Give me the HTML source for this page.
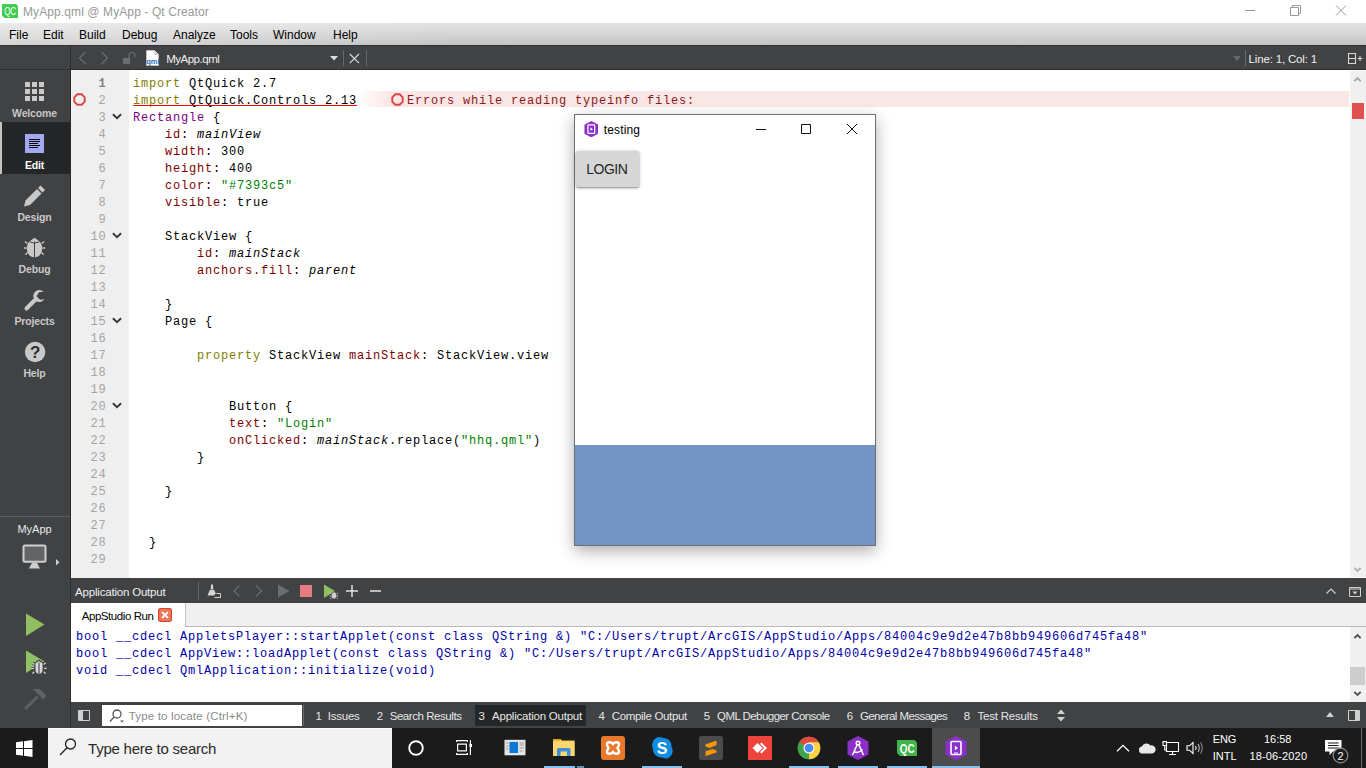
<!DOCTYPE html>
<html lang="en">
<head>
<meta charset="utf-8">
<title>MyApp.qml @ MyApp - Qt Creator</title>
<style>
*{box-sizing:border-box;margin:0;padding:0}
html,body{width:1366px;height:768px;overflow:hidden;background:#fff}
body{position:relative;font-family:"Liberation Sans",sans-serif;font-size:12px;color:#000}
.abs{position:absolute}
#titlebar{left:0;top:0;width:1366px;height:23px;background:#fff}
#titlebar .t{left:23px;top:5px;font-size:12px;color:#999;white-space:nowrap;letter-spacing:.1px}
#menubar{left:0;top:23px;width:1366px;height:22px;background:linear-gradient(#e3e3e3 0%,#d5d5d5 50%,#c4c4c4 100%)}
#menubar span{position:absolute;top:5px;font-size:12px;color:#000;white-space:nowrap}
#side{left:0;top:45px;width:71px;height:683px;background:#404244}
#toolbar{left:71px;top:45px;width:1295px;height:25px;background:#404244}
.mode{position:absolute;left:0;width:71px;height:52px}
.mode .lbl{position:absolute;left:0;width:69px;top:37px;text-align:center;font-size:10.5px;font-weight:bold;color:#c8c8c8;letter-spacing:-.15px}
#editor{left:71px;top:70px;width:1278px;height:508px;background:#fff}
#gutter{left:71px;top:70px;width:58px;height:508px;background:#efefef}
.ln{position:absolute;left:71px;width:35.4px;height:17px;line-height:17px;text-align:right;font-family:"Liberation Mono",monospace;font-size:12px;letter-spacing:.799px;color:#a4a4a4;white-space:pre}
.cl{position:absolute;left:133px;height:17px;line-height:17px;font-family:"Liberation Mono",monospace;font-size:12px;letter-spacing:.799px;color:#000;white-space:pre}
.k{color:#808000}.ty{color:#800080}.p{color:#800000}.s{color:#008000}.i{font-style:italic}
.fold{position:absolute;left:112px;width:10px;height:7px}
#vscroll{left:1349px;top:70px;width:17px;height:508px;background:#fff}
#outhead{left:71px;top:578px;width:1295px;height:25px;background:#404244}
#outtabs{left:71px;top:603px;width:1295px;height:24px;background:#f0f0f0;border-bottom:1px solid #b9b9b9}
#outpane{left:71px;top:627px;width:1278px;height:75px;background:#fff}
.ol{position:absolute;left:76px;height:17px;line-height:17px;font-family:"Liberation Mono",monospace;font-size:12px;letter-spacing:.799px;color:#0000aa;white-space:pre}
#statusbar{left:71px;top:702px;width:1295px;height:26px;background:#404244}
#statusbar .it{position:absolute;top:1px;height:26px;line-height:27px;color:#e6e6e6;font-size:11.5px;white-space:nowrap}
#taskbar{left:0;top:728px;width:1366px;height:40px;background:#1b1b1b}
</style>
</head>
<body>
<!--TITLEBAR-->
<div id="titlebar" class="abs">
  <svg class="abs" style="left:2px;top:4px" width="16" height="14" viewBox="0 0 16 14"><path d="M0 0H14L16 2V14H2.500L0 11.500Z" fill="#41cd52"/><text x="2.200" y="11.300" font-family="Liberation Sans, sans-serif" font-size="10.500" fill="#fff" textLength="11.800" lengthAdjust="spacingAndGlyphs">QC</text></svg>
  <div class="abs t" id="f_title" style="letter-spacing:0.1px">MyApp.qml @ MyApp - Qt Creator</div>
  <svg class="abs" style="left:1240px;top:0" width="126" height="23" viewBox="0 0 126 23" fill="none" stroke="#999" stroke-width="1">
    <path d="M5 10.5H15"/>
    <path d="M50.5 7.5H58.5V15.500H50.5Z M52.5 7.5V5.5H60.5V13.5H58.5"/>
    <path d="M96 5.5L106 15.500M106 5.5L96 15.500"/>
  </svg>
</div>

<!--/TITLEBAR-->
<!--MENUBAR-->
<div id="menubar" class="abs">
  <div class="abs" style="left:0;top:0;width:460px;height:22px;background:linear-gradient(90deg,rgba(255,255,255,.28),rgba(255,255,255,.2) 40%,rgba(255,255,255,0))"></div>
  <span style="left:9px">File</span><span style="left:43px">Edit</span><span style="left:79px">Build</span><span style="left:122px">Debug</span><span style="left:173px">Analyze</span><span style="left:230px">Tools</span><span style="left:273px">Window</span><span style="left:333px">Help</span>
</div>

<!--/MENUBAR-->
<!--SIDE-->
<div id="side" class="abs">
  <div class="abs" style="left:70px;top:0;width:1px;height:683px;background:#2d2e30"></div>
  <div class="abs" style="left:0;top:24px;width:70px;height:1px;background:#2d2e30"></div>
  <div class="abs" style="left:0;top:0;width:1366px;height:1px;background:#303133"></div>
  <!-- Welcome : page y 70-122 => local 25-77 -->
  <div class="mode" style="top:25px">
    <svg class="abs" style="left:25px;top:12px" width="19" height="19" viewBox="0 0 19 19" fill="#c9c9c9"><rect x="0" y="0" width="5" height="5"/><rect x="7" y="0" width="5" height="5"/><rect x="14" y="0" width="5" height="5"/><rect x="0" y="7" width="5" height="5"/><rect x="7" y="7" width="5" height="5"/><rect x="14" y="7" width="5" height="5"/><rect x="0" y="14" width="5" height="5"/><rect x="7" y="14" width="5" height="5"/><rect x="14" y="14" width="5" height="5"/></svg>
    <div class="lbl">Welcome</div>
  </div>
  <!-- Edit selected: page y 122-174 => local 77-129 -->
  <div class="mode" style="top:77px;width:70px;background:#242627">
    <div class="abs" style="left:0;top:0;width:2px;height:52px;background:#c4c4c4"></div>
    <svg class="abs" style="left:25px;top:12px" width="19" height="19" viewBox="0 0 19 19"><rect width="19" height="19" fill="#a2a9f0"/><path d="M4 5.500H15M4 7.500H15M4 9.500H13M4 11.500H15M4 13.500H13" stroke="#05050a" stroke-width="1"/></svg>
    <div class="lbl" style="color:#fff">Edit</div>
  </div>
  <!-- Design: 174-226 => local 129 -->
  <div class="mode" style="top:129px">
    <svg class="abs" style="left:23px;top:11px" width="23" height="23" viewBox="0 0 23 23" fill="#c9c9c9"><path d="M1 21.500L2.500 15.500L14 4L18.500 8.500L7 20Z"/><path d="M15 3L17.500 0.500L22 5L19.500 7.500Z"/></svg>
    <div class="lbl">Design</div>
  </div>
  <!-- Debug: 226-278 => local 181 -->
  <div class="mode" style="top:181px">
    <svg class="abs" style="left:23px;top:10px" width="23" height="23" viewBox="0 0 23 23"><path d="M4.300 7.500L1.800 5.500M3.600 12H0.800M4.500 16.500L2.300 18.800M18.700 7.500L21.200 5.500M19.400 12H22.200M18.500 16.500L20.700 18.800" stroke="#c9c9c9" stroke-width="1.300" fill="none"/><path d="M11.500 1.800L15 4.200C18 6 19.200 9 19.200 12.300C19.200 17.500 16 21.300 11.500 21.300C7 21.300 3.800 17.500 3.800 12.300C3.800 9 5 6 8 4.200Z" fill="#c9c9c9"/><path d="M11.500 5.500V21.300M6.500 5.800L11.500 7.200L16.500 5.800" stroke="#404244" stroke-width="1" fill="none"/></svg>
    <div class="lbl">Debug</div>
  </div>
  <!-- Projects: 278-330 => local 233 -->
  <div class="mode" style="top:233px">
    <svg class="abs" style="left:23px;top:11px" width="23" height="23" viewBox="0 0 23 23"><path d="M3.500 19.500L13 10" stroke="#c9c9c9" stroke-width="4" stroke-linecap="round" fill="none"/><path d="M20 2.200A6 6 0 1 0 21.800 9.500L17.500 10.500L13.500 7.500L15.500 3.200Z" fill="#c9c9c9" transform="rotate(8 16 7)"/></svg>
    <div class="lbl">Projects</div>
  </div>
  <!-- Help: 330-382 => local 285 -->
  <div class="mode" style="top:285px">
    <svg class="abs" style="left:24px;top:11px" width="22" height="22" viewBox="0 0 22 22"><circle cx="11.100" cy="11" r="10.200" fill="#c9c9c9"/><text x="11.100" y="17" text-anchor="middle" font-family="Liberation Sans, sans-serif" font-weight="bold" font-size="17" fill="#2c2d2f">?</text></svg>
    <div class="lbl">Help</div>
  </div>
  <!-- separator at page y 516 => local 471 -->
  <div class="abs" style="left:0;top:471px;width:70px;height:1px;background:#5c5e60"></div>
  <div class="abs" style="left:0;top:478px;width:69px;text-align:center;font-size:11px;color:#e8e8e8">MyApp</div>
  <svg class="abs" style="left:22.400px;top:498.500px" width="40" height="27" viewBox="0 0 40 27"><rect x="1.500" y="1.500" width="22" height="16.300" rx="1.500" fill="#626466" stroke="#cfcfcf" stroke-width="2"/><path d="M10 18.800H15L18 24.500H7Z" fill="#cfcfcf"/><path d="M34 15L37.500 18.300L34 21.600Z" fill="#cfcfcf"/></svg>
  <!-- run: page 613-636 => local 568 -->
  <svg class="abs" style="left:25px;top:568px" width="20" height="24" viewBox="0 0 20 24"><path d="M1 0.500L19.500 11.500L1 23Z" fill="#8fbf60"/></svg>
  <svg class="abs" style="left:25px;top:605px" width="24" height="26" viewBox="0 0 24 26"><path d="M1 0.500L19.500 11.500L1 23Z" fill="#8fc063"/><path d="M9.300 14.500L7.300 12.800M8.800 18.300H6.300M9.300 21.800L7.300 23.600M18.700 14.500L20.700 12.800M19.200 18.300H21.700M18.700 21.800L20.700 23.600" stroke="#404244" stroke-width="2.600" fill="none"/><path d="M14 10.300L18.200 13V19.500Q18.200 24.300 14 24.300Q9.800 24.300 9.800 19.500V13Z" fill="#d8d8d8" stroke="#404244" stroke-width="1.300"/><path d="M9.300 14.500L7.300 12.800M8.800 18.300H6.300M9.300 21.800L7.300 23.600M18.700 14.500L20.700 12.800M19.200 18.300H21.700M18.700 21.800L20.700 23.600" stroke="#d8d8d8" stroke-width="1.200" fill="none"/><path d="M14 12.500V24" stroke="#404244" stroke-width="1.100"/></svg>
  <svg class="abs" style="left:22px;top:642px" width="26" height="26" viewBox="0 0 26 26"><path d="M3 22L15.500 9.800" stroke="#5f6163" stroke-width="3" fill="none"/><path d="M10.900 2H18.200L24.500 8.700L21.300 12.400Z" fill="#5f6163"/></svg>
</div>

<!--/SIDE-->
<!--TOOLBAR-->
<div id="toolbar" class="abs">
  <div class="abs" style="left:0;top:0;width:1295px;height:1px;background:#303133"></div>
  <div class="abs" style="left:0;top:24px;width:1295px;height:1px;background:#2a2b2c"></div>
  <svg class="abs" style="left:7px;top:6px" width="60" height="14" viewBox="0 0 60 14" fill="none" stroke="#6b6d6f" stroke-width="1.200"><path d="M7.500 1L1.500 7L7.500 13"/><path d="M23.500 1L29.500 7L23.500 13"/><path d="M45.500 7.500H51.500V12.500H45.500Z" fill="#6b6d6f"/><path d="M51 7V4.500A3 3 0 0 1 57 4.500V6"/></svg>
  <svg class="abs" style="left:74px;top:5px" width="16" height="17" viewBox="0 0 16 17"><path d="M1.500 0.500H9.500L13.500 4.500V15.500H1.500Z" fill="#fff" stroke="#c8c8c8" stroke-width=".8"/><path d="M9.500 0.500V4.500H13.500" fill="#ddd" stroke="#bbb" stroke-width=".6"/><text x="7.800" y="13.500" text-anchor="middle" font-family="Liberation Sans, sans-serif" font-size="7.500" font-weight="bold" fill="#2a6fc0">qml</text></svg>
  <div class="abs" id="f_tbfile" style="left:95.2px;top:8px;font-size:11.5px;color:#f0f0f0;white-space:nowrap;letter-spacing:-0.49px">MyApp.qml</div>
  <svg class="abs" style="left:258.800px;top:11px" width="8" height="4.500" viewBox="0 0 8 4.500"><path d="M0 0H8L4 4.500Z" fill="#dcdcdc"/></svg>
  <div class="abs" style="left:272px;top:5px;width:1px;height:16px;background:#66686a"></div>
  <svg class="abs" style="left:277px;top:7px" width="12" height="12" viewBox="0 0 12 12"><path d="M1.800 2L11 11.200M11 2L1.800 11.200" stroke="#d8d8d8" stroke-width="1.200"/></svg>
  <div class="abs" style="left:295px;top:5px;width:1px;height:16px;background:#66686a"></div>
  <svg class="abs" style="left:1162px;top:11px" width="8" height="5" viewBox="0 0 8 5"><path d="M0 0H8L4 5Z" fill="#66686a"/></svg>
  <div class="abs" style="left:1174px;top:5px;width:1px;height:16px;background:#66686a"></div>
  <div class="abs" id="f_linecol" style="left:1177.6px;top:8px;font-size:11.5px;color:#f0f0f0;white-space:nowrap;letter-spacing:-0.17px">Line: 1, Col: 1</div>
  <svg class="abs" style="left:1277px;top:7px" width="15" height="13" viewBox="0 0 15 13" fill="none" stroke="#d8d8d8" stroke-width="1.100"><path d="M0.500 1.500H7.500V11.500H0.500ZM0.500 6.500H7.500"/><path d="M9.500 6.500H14.500M12 4V9"/></svg>
</div>

<!--/TOOLBAR-->
<!--EDITOR-->
<div id="editor" class="abs"></div>
<div id="gutter" class="abs"></div>
<div class="abs" style="left:129px;top:91px;width:1220px;height:16px;background:linear-gradient(90deg,rgba(251,230,230,0) 0,rgba(251,230,230,0) 228px,#fbe6e6 260px,#fbe6e6 100%)"></div>
<div class="ln" style="top:76px;font-weight:bold;color:#7d7d7d">1</div>
<div class="cl" style="top:76px"><span class="k">import</span> QtQuick 2.7</div>
<div class="ln" style="top:93px">2</div>
<div class="cl" style="top:93px"><span class="k u">import</span><span class="u"> QtQuick.Controls 2.13</span></div>
<div class="ln" style="top:110px">3</div>
<div class="cl" style="top:110px"><span class="ty">Rectangle</span> {</div>
<svg class="fold" style="top:113px" viewBox="0 0 10 7"><path d="M0.900 1.200L5 5.200L9.100 1.200" fill="none" stroke="#363636" stroke-width="1.900"/></svg>
<div class="ln" style="top:127px">4</div>
<div class="cl" style="top:127px">    <span class="p">id</span>: <span class="i">mainView</span></div>
<div class="ln" style="top:144px">5</div>
<div class="cl" style="top:144px">    <span class="p">width</span>: 300</div>
<div class="ln" style="top:161px">6</div>
<div class="cl" style="top:161px">    <span class="p">height</span>: 400</div>
<div class="ln" style="top:178px">7</div>
<div class="cl" style="top:178px">    <span class="p">color</span>: <span class="s">"#7393c5"</span></div>
<div class="ln" style="top:195px">8</div>
<div class="cl" style="top:195px">    <span class="p">visible</span>: true</div>
<div class="ln" style="top:212px">9</div>
<div class="ln" style="top:229px">10</div>
<div class="cl" style="top:229px">    StackView {</div>
<svg class="fold" style="top:232px" viewBox="0 0 10 7"><path d="M0.900 1.200L5 5.200L9.100 1.200" fill="none" stroke="#363636" stroke-width="1.900"/></svg>
<div class="ln" style="top:246px">11</div>
<div class="cl" style="top:246px">        <span class="p">id</span>: <span class="i">mainStack</span></div>
<div class="ln" style="top:263px">12</div>
<div class="cl" style="top:263px">        <span class="p">anchors.fill</span>: <span class="i">parent</span></div>
<div class="ln" style="top:280px">13</div>
<div class="ln" style="top:297px">14</div>
<div class="cl" style="top:297px">    }</div>
<div class="ln" style="top:314px">15</div>
<div class="cl" style="top:314px">    Page {</div>
<svg class="fold" style="top:317px" viewBox="0 0 10 7"><path d="M0.900 1.200L5 5.200L9.100 1.200" fill="none" stroke="#363636" stroke-width="1.900"/></svg>
<div class="ln" style="top:331px">16</div>
<div class="ln" style="top:348px">17</div>
<div class="cl" style="top:348px">        <span class="k">property</span> StackView <span class="p">mainStack</span>: StackView.view</div>
<div class="ln" style="top:365px">18</div>
<div class="ln" style="top:382px">19</div>
<div class="ln" style="top:399px">20</div>
<div class="cl" style="top:399px">            Button {</div>
<svg class="fold" style="top:402px" viewBox="0 0 10 7"><path d="M0.900 1.200L5 5.200L9.100 1.200" fill="none" stroke="#363636" stroke-width="1.900"/></svg>
<div class="ln" style="top:416px">21</div>
<div class="cl" style="top:416px">            <span class="p">text</span>: <span class="s">"Login"</span></div>
<div class="ln" style="top:433px">22</div>
<div class="cl" style="top:433px">            <span class="p">onClicked</span>: <span class="i">mainStack</span>.replace(<span class="s">"hhq.qml"</span>)</div>
<div class="ln" style="top:450px">23</div>
<div class="cl" style="top:450px">        }</div>
<div class="ln" style="top:467px">24</div>
<div class="ln" style="top:484px">25</div>
<div class="cl" style="top:484px">    }</div>
<div class="ln" style="top:501px">26</div>
<div class="ln" style="top:518px">27</div>
<div class="ln" style="top:535px">28</div>
<div class="cl" style="top:535px">  }</div>
<div class="ln" style="top:552px">29</div>
<div class="abs" style="left:133px;top:105px;width:224px;height:1px;background:#f00000"></div>
<svg class="abs" style="left:72.500px;top:92.500px" width="13" height="13" viewBox="0 0 13 13"><path d="M4.300 1.300H8.700L11.700 4.300V8.700L8.700 11.700H4.300L1.300 8.700V4.300Z" fill="none" stroke="#dc4446" stroke-width="1.900"/></svg>
<svg class="abs" style="left:391.400px;top:92.500px" width="13" height="13" viewBox="0 0 13 13"><path d="M4.300 1.300H8.700L11.700 4.300V8.700L8.700 11.700H4.300L1.300 8.700V4.300Z" fill="none" stroke="#dc4446" stroke-width="1.900"/></svg>
<div class="cl" style="left:407px;top:93px;color:#8b1a1a">Errors while reading typeinfo files:</div>
<div id="vscroll" class="abs"><div class="abs" style="left:1px;top:1px;width:16px;height:506px;background:#f0f0f0"></div><svg class="abs" style="left:4px;top:6px" width="9" height="6" viewBox="0 0 9 6"><path d="M1.300 5.200L4.500 2L7.700 5.200" fill="none" stroke="#a6a6a6" stroke-width="1.900"/></svg><div class="abs" style="left:3px;top:33px;width:12px;height:16px;background:#e0504e"></div><svg class="abs" style="left:4px;top:497px" width="9" height="6" viewBox="0 0 9 6"><path d="M1.300 0.800L4.500 4L7.700 0.800" fill="none" stroke="#b0b0b0" stroke-width="1.900"/></svg></div>
<!--/EDITOR-->
<!--OUTPUT-->
<div id="outhead" class="abs">
  <div class="abs" id="f_appout" style="left:4.1px;top:8px;font-size:11.5px;color:#f0f0f0;white-space:nowrap;letter-spacing:-0.2px">Application Output</div>
  <div class="abs" style="left:127px;top:4px;width:1px;height:18px;background:#66686a"></div>
  <!-- clean icon -->
  <svg class="abs" style="left:135px;top:6px" width="16" height="15" viewBox="0 0 16 15"><path d="M5 0.500H7L7.300 5.500H4.700Z M3.800 6H8.200L9.800 9.500L8 11.500H1.500Z" fill="#d4d4d4"/><path d="M10.500 9.500H14.500V13.500H8.500" fill="none" stroke="#d4d4d4" stroke-width="1"/></svg>
  <svg class="abs" style="left:162px;top:7px" width="32" height="12" viewBox="0 0 32 12" fill="none" stroke="#6b6d6f" stroke-width="1.200"><path d="M6.500 0.500L1 6L6.500 11.500"/><path d="M23 0.500L28.500 6L23 11.500"/></svg>
  <svg class="abs" style="left:206px;top:6px" width="13" height="14" viewBox="0 0 13 14"><path d="M1 0.500L12.500 7L1 13.500Z" fill="#6b6d6f"/></svg>
  <div class="abs" style="left:229px;top:7px;width:12px;height:12px;background:#e57c80"></div>
  <svg class="abs" style="left:252px;top:5.500px" width="16" height="16" viewBox="0 0 16 16"><path d="M1 0.500L12 7L1 14Z" fill="#8fbf60"/><ellipse cx="11" cy="11.500" rx="2.800" ry="3.500" fill="#d0d0d0" stroke="#404244" stroke-width=".6"/><path d="M8 9.500L6.800 8.800M8 12H6.500M8.300 14L7 15M14 9.500L15.200 8.800M14 12H15.500M13.700 14L15 15" stroke="#d0d0d0" stroke-width=".8"/></svg>
  <svg class="abs" style="left:275px;top:7px" width="36" height="12" viewBox="0 0 36 12" stroke="#e4e4e4" stroke-width="1.500"><path d="M0 6H12M6 0V12"/><path d="M24 6H35"/></svg>
  <svg class="abs" style="left:1255px;top:10px" width="10" height="6" viewBox="0 0 10 6"><path d="M0.500 5.500L5 1L9.500 5.500" fill="none" stroke="#d0d0d0" stroke-width="1.200"/></svg>
  <svg class="abs" style="left:1278px;top:9px" width="12" height="10" viewBox="0 0 12 10"><path d="M0.500 0.500H11.500V9.500H0.500Z M0.500 2H11.500" fill="none" stroke="#d0d0d0" stroke-width="1"/><path d="M3.500 4.500H8.500L6 7.500Z" fill="#d0d0d0"/></svg>
</div>
<div id="outtabs" class="abs">
  <div class="abs" style="left:0;top:0;width:115px;height:24px;background:#fff;border-right:1px solid #c4c4c4"></div>
  <div class="abs" id="f_tabrun" style="left:10.7px;top:7px;font-size:11.5px;color:#000;white-space:nowrap;letter-spacing:-0.43px">AppStudio Run</div>
  <svg class="abs" style="left:87px;top:5px" width="14" height="14" viewBox="0 0 13 13"><rect x=".5" y=".5" width="12" height="12" rx="2" fill="#e9795a" stroke="#d8402a" stroke-width="1"/><path d="M3.800 3.800L9.200 9.200M9.200 3.800L3.800 9.200" stroke="#fff" stroke-width="1.800"/></svg>
</div>
<div id="outpane" class="abs"></div>
<div class="ol" style="top:629px">bool __cdecl AppletsPlayer::startApplet(const class QString &amp;) "C:/Users/trupt/ArcGIS/AppStudio/Apps/84004c9e9d2e47b8bb949606d745fa48"</div>
<div class="ol" style="top:646px">bool __cdecl AppView::loadApplet(const class QString &amp;) "C:/Users/trupt/ArcGIS/AppStudio/Apps/84004c9e9d2e47b8bb949606d745fa48"</div>
<div class="ol" style="top:663px">void __cdecl QmlApplication::initialize(void)</div>
<div class="abs" style="left:1349px;top:627px;width:17px;height:75px;background:#fff">
  <div class="abs" style="left:1px;top:0;width:16px;height:75px;background:#f0f0f0"></div>
  <svg class="abs" style="left:4px;top:6px" width="9" height="6" viewBox="0 0 9 6"><path d="M1.300 5.200L4.500 2L7.700 5.200" fill="none" stroke="#505050" stroke-width="1.900"/></svg>
  <div class="abs" style="left:1px;top:40px;width:15px;height:18px;background:#cdcdcd"></div>
  <svg class="abs" style="left:4px;top:64px" width="9" height="6" viewBox="0 0 9 6"><path d="M1.300 0.800L4.500 4L7.700 0.800" fill="none" stroke="#505050" stroke-width="1.900"/></svg>
</div>

<!--/OUTPUT-->
<!--STATUS-->
<div id="statusbar" class="abs">
  <svg class="abs" style="left:7px;top:8px" width="12" height="11" viewBox="0 0 12 11"><path d="M0.500 0.500H11.500V10.500H0.500Z" fill="none" stroke="#d0d0d0" stroke-width="1"/><path d="M1 1H5V10H1Z" fill="#d0d0d0"/></svg>
  <div class="abs" style="left:31px;top:3px;width:200px;height:21px;background:#fff"></div>
  <svg class="abs" style="left:38px;top:7px" width="16" height="14" viewBox="0 0 16 14" fill="none" stroke="#555" stroke-width="1.300"><circle cx="8" cy="5" r="4"/><path d="M5 8L1 12.500"/><path d="M11 11.500H15L13 13.500Z" fill="#555" stroke="none"/></svg>
  <div class="it" id="f_loc" style="left:57.7px;color:#8a8a8a;letter-spacing:0.18px">Type to locate (Ctrl+K)</div>
  <div class="abs" style="left:232px;top:3px;width:1px;height:21px;background:#66686a"></div>
  <div class="abs" style="left:404px;top:3px;width:111px;height:21px;background:#242627"></div>
  <div class="it" style="left:244.5px">1</div><div class="it" id="f_s1" style="left:256.7px;letter-spacing:-0.21px">Issues</div>
  <div class="it" style="left:305.8px">2</div><div class="it" id="f_s2" style="left:318.7px;letter-spacing:-0.44px">Search Results</div>
  <div class="it" style="left:407.5px">3</div><div class="it" id="f_s3" style="left:421.1px;letter-spacing:-0.23px">Application Output</div>
  <div class="it" style="left:527.5px">4</div><div class="it" id="f_s4" style="left:540.7px;letter-spacing:-0.33px">Compile Output</div>
  <div class="it" style="left:632.8px">5</div><div class="it" id="f_s5" style="left:646.1px;letter-spacing:-0.56px">QML Debugger Console</div>
  <div class="it" style="left:775.8px">6</div><div class="it" id="f_s6" style="left:788.9px;letter-spacing:-0.57px">General Messages</div>
  <div class="it" style="left:892.8px">8</div><div class="it" id="f_s8" style="left:906.4px;letter-spacing:-0.19px">Test Results</div>
  <svg class="abs" style="left:986px;top:7px" width="8" height="13" viewBox="0 0 8 13" fill="#d0d0d0"><path d="M0 5L4 0.500L8 5Z M0 8L4 12.500L8 8Z"/></svg>
  <svg class="abs" style="left:1255px;top:10px" width="8" height="5" viewBox="0 0 8 5"><path d="M0 5L4 0L8 5Z" fill="#d0d0d0"/></svg>
  <svg class="abs" style="left:1277px;top:8px" width="12" height="11" viewBox="0 0 12 11"><path d="M0.500 0.500H11.500V10.500H0.500Z" fill="none" stroke="#d0d0d0" stroke-width="1"/><path d="M7 1H11V10H7Z" fill="#d0d0d0"/></svg>
</div>

<!--/STATUS-->
<!--TASKBAR-->
<div id="taskbar" class="abs">
  <!-- start -->
  <svg class="abs" style="left:16px;top:12px" width="17" height="17" viewBox="0 0 17 17" fill="#fff"><path d="M0 2.300L7 1.300V8H0Z M8 1.150L16.500 0V8H8Z M0 9H7V15.700L0 14.700Z M8 9H16.500V17L8 15.850Z"/></svg>
  <!-- search -->
  <div class="abs" style="left:48px;top:0;width:344px;height:40px;background:#f2f2f2;border-top:1px solid #fafafa"></div>
  <svg class="abs" style="left:59px;top:9px" width="20" height="20" viewBox="0 0 20 20" fill="none" stroke="#222" stroke-width="1.300"><circle cx="11.500" cy="7" r="5"/><path d="M8 10.800L1 18"/></svg>
  <div class="abs" id="f_search" style="left:88.1px;top:12px;font-size:15px;color:#2a2a2a;white-space:nowrap;letter-spacing:-0.24px">Type here to search</div>
  <!-- cortana -->
  <svg class="abs" style="left:407px;top:11px" width="18" height="18" viewBox="0 0 18 18"><circle cx="9" cy="9" r="6.800" fill="none" stroke="#fff" stroke-width="1.900"/></svg>
  <!-- task view -->
  <svg class="abs" style="left:455px;top:11px" width="18" height="17" viewBox="0 0 18 17" fill="none" stroke="#fff" stroke-width="1.200"><path d="M2.600 5.100H11.400V11.900H2.600Z"/><path d="M1.600 3V1.600H12.400V3M1.600 14V15.400H12.400V14"/><path d="M15.400 1V16"/><path d="M14.500 5H17V8H14.500Z" fill="#fff" stroke="none"/></svg>
  <!-- news / widgets -->
  <svg class="abs" style="left:504px;top:11px" width="22" height="17" viewBox="0 0 22 17"><rect x=".5" y=".8" width="21" height="15.500" fill="#e4e4e4"/><rect x="5.500" y="3" width="8.500" height="11" fill="#0a78d7"/><path d="M2 4H4.500M2 7H4.500M2 10H4.500M15.500 4H20M15.500 6H20M15.500 9H20M15.500 12H18.500" stroke="#9a9a9a" stroke-width="1"/></svg>
  <!-- explorer -->
  <svg class="abs" style="left:552px;top:10px" width="24" height="19" viewBox="0 0 24 19"><path d="M1 1H8.500L10 2.500H22.500V18H1Z" fill="#f7c948"/><path d="M1 3.500H22.500V18H1Z" fill="#fcd86f"/><path d="M1 1H8.500V2.500H1Z" fill="#e0a020"/><path d="M5 18V11.500Q5 10 6.500 10H17Q18.500 10 18.500 11.500V18H15V13.500H8.500V18Z" fill="#3d8fdc"/></svg>
  <div class="abs" style="left:544px;top:38px;width:31px;height:2px;background:#84c1f0"></div>
  <div class="abs" style="left:577px;top:38px;width:7px;height:2px;background:#5e8fb5"></div>
  <!-- xampp -->
  <svg class="abs" style="left:601px;top:8px" width="24" height="24" viewBox="0 0 24 24"><rect width="24" height="24" rx="3" fill="#e8782c"/><path d="M6 8.500C6 5.500 10 5.500 12 8C14 5.500 18 5.500 18 8.500C18 10.500 16.500 11 16.500 12C16.500 13 18 13.500 18 15.500C18 18.500 14 18.500 12 16C10 18.500 6 18.500 6 15.500C6 13.500 7.500 13 7.500 12C7.500 11 6 10.500 6 8.500Z" fill="none" stroke="#fff" stroke-width="2.400"/></svg>
  <!-- skype -->
  <svg class="abs" style="left:650px;top:8px" width="24" height="24" viewBox="0 0 24 24"><path d="M7 1.500C10 0 12 2 13.500 2C19 2 22 6.500 21.500 11C23.500 14 23 19 19 21.500C16 23.500 13.500 21.500 12 21.500C6 21.500 2.500 17 3 12.500C1 9 2.500 3.500 7 1.500Z" fill="#0f8de2"/><text x="12" y="17.800" text-anchor="middle" font-family="Liberation Sans, sans-serif" font-weight="bold" font-size="16" fill="#fff">S</text></svg>
  <div class="abs" style="left:642px;top:38px;width:40px;height:2px;background:#84c1f0"></div>
  <!-- sublime -->
  <svg class="abs" style="left:699px;top:8px" width="24" height="24" viewBox="0 0 24 24"><rect width="24" height="24" rx="2.500" fill="#4b4b4b"/><path d="M6.500 8.500L17.500 4.500V9L10.500 12L17.500 14.500V16.500L6.500 20V15.500L13.500 13L6.500 10.500Z" fill="#ff9800"/></svg>
  <!-- anydesk -->
  <svg class="abs" style="left:748px;top:8px" width="24" height="24" viewBox="0 0 24 24"><rect width="24" height="24" fill="#ef443b"/><path d="M4.500 12L9.500 7L14.500 12L9.500 17Z" fill="#fff"/><path d="M13.500 6.500L19 12L13.500 17.500L12 16L16 12L12 8Z" fill="#fff"/></svg>
  <!-- chrome -->
  <svg class="abs" style="left:797px;top:8px" width="24" height="24" viewBox="0 0 24 24"><circle cx="12" cy="12" r="11.300" fill="#4caf50"/><path d="M12 12L2.214 6.350A11.300 11.300 0 0 1 21.786 6.350Z" fill="#e04a3f"/><path d="M2.214 6.350A11.300 11.300 0 0 1 21.786 6.350L12 6.350Z" fill="#e04a3f"/><path d="M21.786 6.350A11.300 11.300 0 0 1 12 23.300L12 12Z" fill="#fdd23e"/><path d="M12 12L21.786 6.350H12Z" fill="#fdd23e"/><path d="M2.214 6.350L12 12V23.300A11.300 11.300 0 0 1 2.214 6.350Z" fill="#3fa34d"/><circle cx="12" cy="12" r="5.600" fill="#f1f1f1"/><circle cx="12" cy="12" r="4.300" fill="#4a8af4"/></svg>
  <div class="abs" style="left:789px;top:38px;width:40px;height:2px;background:#84c1f0"></div>
  <!-- appstudio -->
  <svg class="abs" style="left:846px;top:8px" width="24" height="24" viewBox="0 0 24 24"><path d="M12 0L22.500 5.500V18.500L12 24L1.500 18.500V5.500Z" fill="#8b2fc9"/><g fill="none" stroke="#fff" stroke-width="1.500"><circle cx="12" cy="7" r="1.800"/><path d="M11.200 8.800L6.500 19M12.800 8.800L17.500 19M8 15.500Q12 18 16.500 13.500"/></g></svg>
  <div class="abs" style="left:838px;top:38px;width:40px;height:2px;background:#84c1f0"></div>
  <!-- qt creator -->
  <svg class="abs" style="left:896px;top:12px" width="22" height="16" viewBox="0 0 22 16"><path d="M1 0H18.500L21 2.500V16H4L1 13Z" fill="#3fb44a"/><text x="3.800" y="12.800" font-family="Liberation Sans, sans-serif" font-weight="bold" font-size="12.500" fill="#fff" textLength="14.800" lengthAdjust="spacingAndGlyphs">QC</text></svg>
  <div class="abs" style="left:887px;top:38px;width:40px;height:2px;background:#84c1f0"></div>
  <!-- player (active) -->
  <div class="abs" style="left:932px;top:0;width:48px;height:40px;background:#4c4c4c"></div>
  <svg class="abs" style="left:944px;top:8px" width="24" height="24" viewBox="0 0 24 24"><path d="M12 0L22.500 5.500V18.500L12 24L1.500 18.500V5.500Z" fill="#8b2fc9"/><rect x="7" y="5.500" width="10" height="13" rx="1" fill="none" stroke="#fff" stroke-width="1.600"/><path d="M10.800 9.500L14 12L10.800 14.500Z" fill="#fff"/><path d="M10 17H14" stroke="#fff" stroke-width="1"/></svg>
  <div class="abs" style="left:932px;top:38px;width:48px;height:2px;background:#84c1f0"></div>
  <!-- tray -->
  <svg class="abs" style="left:1116px;top:16px" width="14" height="8" viewBox="0 0 14 8"><path d="M1 7.300L7 1.300L13 7.300" fill="none" stroke="#fff" stroke-width="1.300"/></svg>
  <svg class="abs" style="left:1138px;top:14px" width="18" height="12" viewBox="0 0 18 12"><path d="M4 11.500A3.500 3.500 0 0 1 3.800 4.600A5 5 0 0 1 12.500 3.500A4 4 0 0 1 14.500 11.500Z" fill="#e8e8e8"/></svg>
  <svg class="abs" style="left:1162px;top:13px" width="18" height="15" viewBox="0 0 18 15" fill="none" stroke="#fff" stroke-width="1.100"><path d="M4.500 1.500H16.500V10.500H4.500Z"/><path d="M10.500 10.500V13.500M7 13.500H14"/><path d="M1 0.600H4.500V4.500H1Z M2.700 4.500V9H4.500"/></svg>
  <svg class="abs" style="left:1186px;top:13px" width="18" height="14" viewBox="0 0 18 14" fill="none" stroke="#fff" stroke-width="1.100"><path d="M1 4.800H3.500L7 1.500V12.500L3.500 9.200H1Z"/><path d="M9.500 5Q10.800 7 9.500 9" /><path d="M12 3Q14.500 7 12 11" stroke="#bbb"/><path d="M14.500 1.500Q18 7 14.500 12.500" stroke="#888"/></svg>
  <div class="abs" id="f_eng" style="left:1212.7px;top:5px;font-size:11px;color:#fff;white-space:nowrap;letter-spacing:-0.12px">ENG</div>
  <div class="abs" id="f_intl" style="left:1212.7px;top:22px;font-size:11px;color:#fff;white-space:nowrap;letter-spacing:0.02px">INTL</div>
  <div class="abs" id="f_time" style="left:1264.0px;top:5px;font-size:11px;color:#fff;white-space:nowrap;letter-spacing:-0.03px">16:58</div>
  <div class="abs" id="f_date" style="left:1249.4px;top:22px;font-size:11px;color:#fff;white-space:nowrap;letter-spacing:0.15px">18-06-2020</div>
  <svg class="abs" style="left:1324px;top:11px" width="26" height="26" viewBox="0 0 26 26"><path d="M1 1H17.500V12.500H9L5.500 16V12.500H1Z" fill="#fff"/><path d="M4 4H14.500M4 6.500H14.500M4 9H14.500" stroke="#1b1b1b" stroke-width="1"/><circle cx="16.500" cy="16.500" r="7.300" fill="#1b1b1b" stroke="#8a8a8a" stroke-width="1.200"/><text x="16.500" y="20.500" text-anchor="middle" font-family="Liberation Sans, sans-serif" font-size="11" fill="#fff">2</text></svg>
  <div class="abs" style="left:1361px;top:0;width:1px;height:40px;background:#6a6a6a"></div>
</div>

<!--/TASKBAR-->
<!--POPUP-->
<div class="abs" style="left:574px;top:114px;width:302px;height:432px;background:#fff;border:1px solid #6f6f6f;box-shadow:0 5px 15px rgba(0,0,0,.32)">
  <!-- title bar (local coords: page - 575, page - 115) -->
  <svg class="abs" style="left:8.600px;top:5.700px" width="14.600" height="16.400" viewBox="0 0 16 18"><path d="M8 0L15.500 4V14L8 18L0.500 14V4Z" fill="#8b2fc9"/><rect x="4.300" y="4.300" width="7.400" height="9.400" rx=".8" fill="none" stroke="#fff" stroke-width="1.400"/><path d="M7 7.200L9.800 9L7 10.800Z" fill="#fff"/></svg>
  <div class="abs" id="f_testing" style="left:28.7px;top:8px;font-size:12px;color:#000;white-space:nowrap;letter-spacing:0.16px">testing</div>
  <svg class="abs" style="left:170px;top:0" width="130" height="30" viewBox="0 0 130 30" fill="none" stroke="#111" stroke-width="1"><path d="M11 14.500H21"/><path d="M56.500 9.500H65.500V18.500H56.500Z"/><path d="M102 9L112 19M112 9L102 19"/></svg>
  <!-- client -->
  <div class="abs" style="left:0;top:30px;width:300px;height:300px;background:#fff"></div>
  <div class="abs" style="left:0;top:330px;width:300px;height:100px;background:#7393c5"></div>
  <div class="abs" style="left:1px;top:36px;width:62.500px;height:36px;background:#d6d6d6;border-radius:2px;box-shadow:0 1px 3px rgba(0,0,0,.33),0 1px 1px rgba(0,0,0,.16),0 0 5px rgba(0,0,0,.08)"></div>
  <div class="abs" id="f_login" style="left:11.2px;top:36px;height:36px;line-height:37px;font-size:14px;color:#262626;letter-spacing:-0.49px">LOGIN</div>
</div>

<!--/POPUP-->
</body>
</html>
